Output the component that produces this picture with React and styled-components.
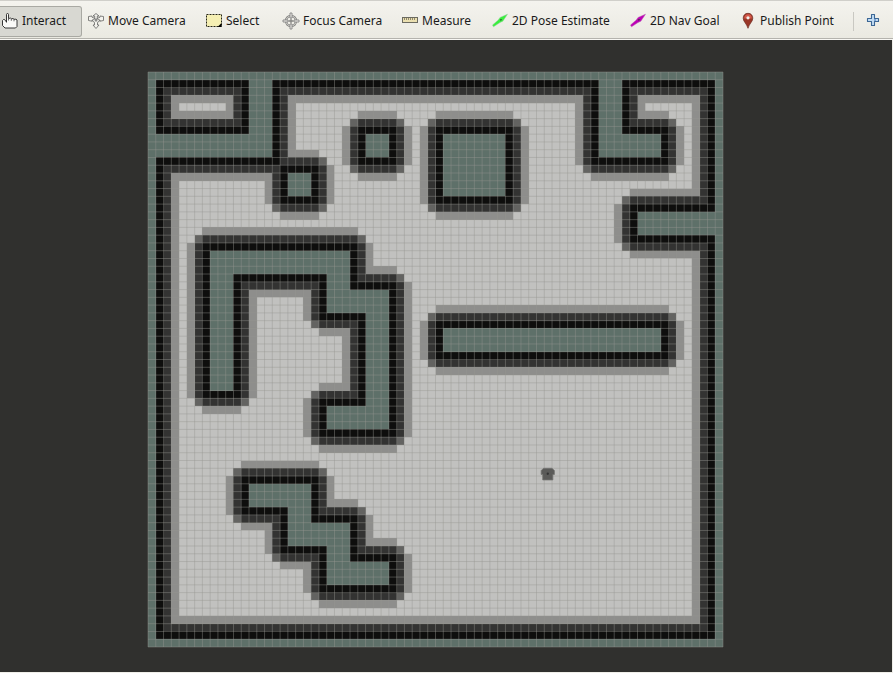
import React from "react";
import styled, { createGlobalStyle } from "styled-components";

const GlobalStyle = createGlobalStyle`
  *, *::before, *::after { box-sizing: border-box; }
  html, body, #root { height: 100%; }
  body { margin: 0; font-family: "Noto Sans", "Open Sans", sans-serif; color: #1a1a1a; }
`;

const Window = styled.div`
  display: flex;
  flex-direction: column;
  min-height: 100vh;
  background: #f0efe9;
`;

const Toolbar = styled.header`
  display: grid;
  grid-template-columns: 82px 118px 77px 119px 90px 138px 110px 119px 1fr;
  align-items: center;
  height: 40px;
  padding: 4px 0 2px;
  background: linear-gradient(#f4f3ee, #eae9e1);
  border-top: 1px solid #d0cfca;
  border-bottom: 1px solid #f8f7f3;
  box-shadow: inset 0 -1px 0 #b4b3ad;
`;

const ToolButton = styled.button`
  display: flex;
  align-items: center;
  gap: 4px;
  height: 31px;
  padding: 0 0 0 ${(p) => (p.$active ? 2 : 6)}px;
  border: 1px solid ${(p) => (p.$active ? "#a9a9a3" : "transparent")};
  border-left: 0;
  border-radius: 0 3px 3px 0;
  background: ${(p) => (p.$active ? "#d8d8d2" : "transparent")};
  color: inherit;
  font: inherit;
  font-size: 12px;
  line-height: 16px;
  white-space: nowrap;
`;

const Extras = styled.div`
  display: flex;
  align-items: center;
  gap: 12px;
`;

const Divider = styled.span`
  width: 1px;
  height: 19px;
  background: #c9c8c2;
`;

const AddButton = styled.button`
  display: flex;
  padding: 0;
  border: 0;
  background: transparent;
`;

const Icon = styled.svg`
  flex: none;
  width: 16px;
  height: 16px;
  overflow: visible;
`;

const Viewport = styled.main`
  flex: 1;
  display: flex;
  align-items: flex-start;
  margin: 0 1px 1px 0;
  padding: 32px 169px 24px 148px;
  background: #30302e;
`;

const MapDrawing = styled.svg`
  flex: 1;
  min-width: 0;
  aspect-ratio: 1;
  overflow: visible;
`;

const HandIcon = () => (
  <Icon viewBox="0 0 16 16">
    <path
      d="M4.500 9.500V1.500Q4.500.5 5.500.5T6.500 1.500V5.500Q9 4.500 9.300 5.800 11.500 5 12 6.300 14.500 5.700 15 7V13.500L13.500 15H3L.5 12.500V7.500L1.500 6.500H2.500L4.500 9"
      fill="#fafaf8" stroke="#242424" strokeWidth=".9" strokeLinejoin="round"
    />
    <path d="M6.500 5.500v2M9.300 5.800v2M12 6.300v2" stroke="#444" strokeWidth=".8" fill="none" />
  </Icon>
);

const MoveIcon = () => (
  <Icon viewBox="0 0 16 16" fill="#f3f2ed" stroke="#656563" strokeWidth=".8" strokeLinejoin="round">
    <path d="M.5 3.500 4 3v1.200L8 6l4-1.800V3l3.500.5v4L12 8.200V7L8 8.500 4 7v1.200L.5 7.500Z" />
    <path d="M8 .5 11 3H9.300v3L12 7.500 9.500 9.500V12H11l-3 3.500L5 12h1.500V9.500L4 7.500 6.700 6V3H5Z" />
    <path d="M6.700 5.500h2.600v3H6.700Z" fill="#8b8b89" stroke="none" />
  </Icon>
);

const SelectIcon = () => (
  <Icon viewBox="0 0 16 16">
    <rect x=".5" y="1.500" width="15" height="12" fill="#f5efb3" stroke="#242416" strokeDasharray="2 1" />
    <path d="M15.500 10v4h-4Z" fill="#000" />
  </Icon>
);

const FocusIcon = () => (
  <Icon viewBox="0 0 16 16" fill="none" stroke="#858583">
    <circle cx="8" cy="8" r="5" strokeWidth="2.400" />
    <circle cx="8" cy="8" r="5" stroke="#e6e5e0" strokeWidth=".8" />
    <path d="M7 0h2v5H7ZM7 11h2v5H7ZM0 7h5v2H0ZM11 7h5v2h-5Z" fill="#f0efea" strokeWidth=".9" />
    <path d="M5.500 8h5M8 5.500v5" strokeWidth="1.300" />
  </Icon>
);

const RulerIcon = () => (
  <Icon viewBox="0 0 16 16">
    <rect x=".5" y="4.500" width="15" height="5" fill="#eadfb0" stroke="#6b6a60" />
    <path d="M2.500 5v2M4.500 5v2M6.500 5v2M8.500 5v2M10.500 5v2M12.500 5v2" stroke="#77715b" strokeWidth=".8" />
  </Icon>
);

const ArrowIcon = ({ color, edge }) => (
  <Icon viewBox="0 0 16 16">
    <path d="M15.500 1.200 8 4.500 6.300 7 .5 12 1.500 13.800 8 9.500l2.800-1.300Z" fill={color} stroke={edge} strokeWidth=".5" />
    <path d="m8 7 1.800-.3" stroke="#28452c" strokeWidth="1" />
  </Icon>
);

const PinIcon = () => (
  <Icon viewBox="0 0 16 16">
    <path d="M8 .3C5 .3 3.200 2.400 3.200 5.200c0 3.500 3.500 5.300 4.800 10.100 1.300-4.800 4.800-6.600 4.800-10.100C12.800 2.400 11 .3 8 .3Z" fill="#9a3627" stroke="#703126" strokeWidth=".7" />
    <path d="M4.200 5.500Q4.200 1.500 8 1.300t3.800 4.200Z" fill="#d4594a" />
    <circle cx="8" cy="4.800" r="1.600" fill="#efeeea" />
  </Icon>
);

const PlusIcon = () => (
  <Icon viewBox="0 0 16 16">
    <path d="M5.500 1.500h3v4h4v3h-4v4h-3v-4h-4v-3h4Z" fill="#c3ddf3" stroke="#3c6795" strokeWidth="1.100" strokeLinejoin="round" />
    <path d="M8 7h2" stroke="#3769b8" />
  </Icon>
);

const TOOLS = [
  { label: "Interact", icon: <HandIcon />, active: true },
  { label: "Move Camera", icon: <MoveIcon /> },
  { label: "Select", icon: <SelectIcon /> },
  { label: "Focus Camera", icon: <FocusIcon /> },
  { label: "Measure", icon: <RulerIcon /> },
  { label: "2D Pose Estimate", icon: <ArrowIcon color="#39ef3d" edge="#92cc99" /> },
  { label: "2D Nav Goal", icon: <ArrowIcon color="#bd00b6" edge="#b85eb1" /> },
  { label: "Publish Point", icon: <PinIcon /> },
];

const SIZE = 74;

// Walls as [first column, first row, last column, last row].
const WALLS = [
  [0, 0, 73, 0], [0, 73, 73, 73], [0, 0, 0, 73], [73, 0, 73, 73],
  [13, 0, 15, 10], [0, 8, 15, 10],
  [18, 13, 20, 15], [28, 8, 30, 10], [38, 8, 45, 15],
  [58, 0, 60, 10], [58, 8, 65, 10], [63, 18, 73, 20],
  [8, 23, 25, 25], [8, 23, 10, 40], [23, 23, 25, 30],
  [23, 28, 30, 30], [28, 28, 30, 45], [23, 43, 30, 45],
  [38, 33, 65, 35],
  [13, 53, 20, 55], [18, 53, 20, 60], [18, 58, 25, 60],
  [23, 58, 25, 65], [23, 63, 30, 65],
];

// Cell colour by squared distance to the nearest wall.
function costColor(x, y) {
  let best = Infinity;
  for (const [x0, y0, x1, y1] of WALLS) {
    const dx = Math.max(x0 - x, 0, x - x1);
    const dy = Math.max(y0 - y, 0, y - y1);
    best = Math.min(best, dx * dx + dy * dy);
  }
  if (best === 0) return "#5e7069";
  if (best <= 2) return "#0e0e0d";
  if (best <= 5) return "#333332";
  if (best <= 8) return "#636361";
  if (best <= 10) return "#8e8e8c";
  return "#c1c1bf";
}

const RUNS = [];
for (let y = 0; y < SIZE; y++) {
  let start = 0;
  for (let x = 1; x <= SIZE; x++) {
    if (x === SIZE || costColor(x, y) !== costColor(start, y)) {
      RUNS.push({ x: start, y, width: x - start, fill: costColor(start, y) });
      start = x;
    }
  }
}

const GRID = Array.from({ length: SIZE + 1 }, (_, i) => `M${i} 0V${SIZE}M0 ${i}H${SIZE}`).join("");

const CostMap = () => (
  <MapDrawing viewBox={`0 0 ${SIZE} ${SIZE}`} role="img" aria-label="Costmap">
    <g shapeRendering="crispEdges">
      {RUNS.map((r) => (
        <rect key={`${r.x}-${r.y}`} x={r.x} y={r.y} width={r.width} height="1" fill={r.fill} />
      ))}
    </g>
    <path d={GRID} fill="none" stroke="#969692" strokeOpacity=".42" vectorEffect="non-scaling-stroke" />
    <path d="M50.900 51h1.100l.3.300v.5h-.2v.7h-1.300v-.7h-.2v-.5Z" fill="#5b5b59" stroke="#747472" strokeWidth=".1" />
    <circle cx="51.450" cy="51.700" r=".15" fill="#333" />
  </MapDrawing>
);

export default function App() {
  return (
    <Window>
      <GlobalStyle />
      <Toolbar>
        {TOOLS.map((t) => (
          <ToolButton key={t.label} type="button" $active={t.active} aria-pressed={Boolean(t.active)}>
            {t.icon}
            {t.label}
          </ToolButton>
        ))}
        <Extras>
          <Divider />
          <AddButton type="button" aria-label="Add tool">
            <PlusIcon />
          </AddButton>
        </Extras>
      </Toolbar>
      <Viewport>
        <CostMap />
      </Viewport>
    </Window>
  );
}
